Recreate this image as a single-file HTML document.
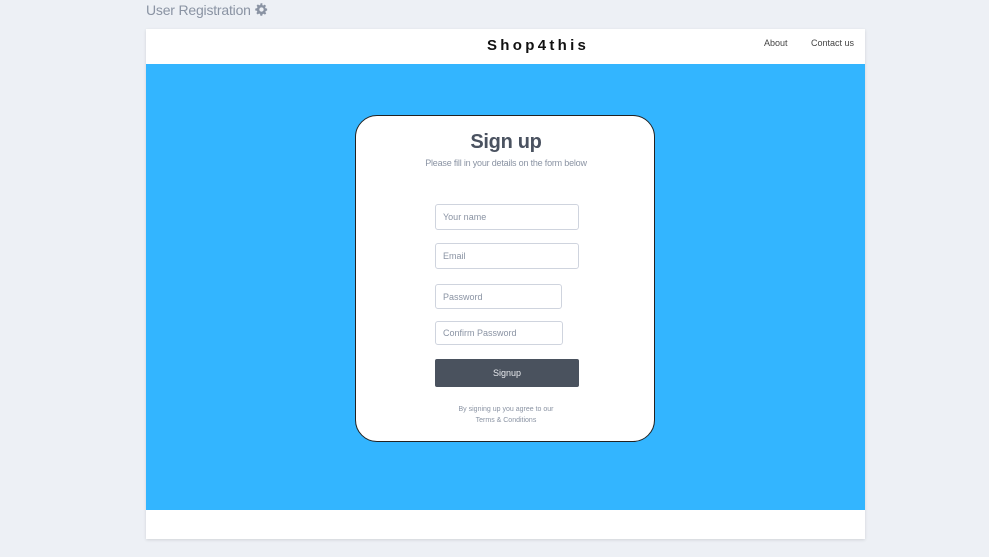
<!DOCTYPE html>
<html><head><style>
body{margin:0;width:989px;height:557px;background:#edf0f5;font-family:"Liberation Sans",sans-serif;position:relative;overflow:hidden}
.abs{position:absolute}
.title{left:146px;top:2px;font-size:14px;color:#8a93a3;letter-spacing:-0.2px}
.frame{left:146px;top:29px;width:719px;height:510px;background:#fff;box-shadow:0 1px 3px rgba(0,0,0,.12)}
.blue{left:146px;top:64px;width:719px;height:446px;background:#33b5ff}
.brand{left:487px;top:37px;font-size:15px;font-weight:bold;letter-spacing:3.3px;color:#111}
.nav{top:38px;font-size:9px;color:#444}
.card{left:355px;top:115px;width:300px;height:327px;background:#fff;border:1px solid #222;border-radius:22px;box-sizing:border-box}
.inp{border:1px solid #cfd4de;border-radius:3px;background:#fff;font-size:9px;color:#8a93a3;box-sizing:border-box;padding-left:7px;display:flex;align-items:center}
</style></head><body>
<div class="abs title">User Registration <svg width="15" height="15" viewBox="0 0 24 24" style="vertical-align:-2px"><path fill="#8a93a3" fill-rule="evenodd" d="M12 8.5a3.5 3.5 0 100 7 3.5 3.5 0 000-7zm9 5v-3l-2.6-.5-.7-1.6 1.5-2.2-2.1-2.1-2.2 1.5-1.6-.7L13.5 2h-3l-.5 2.6-1.6.7-2.2-1.5-2.1 2.1 1.5 2.2-.7 1.6L2 10.5v3l2.6.5.7 1.6-1.5 2.2 2.1 2.1 2.2-1.5 1.6.7.5 2.9h3l.5-2.6 1.6-.7 2.2 1.5 2.1-2.1-1.5-2.2.7-1.6z"/></svg></div>
<div class="abs frame"></div>
<div class="abs blue"></div>
<div class="abs brand">Shop4this</div>
<div class="abs nav" style="left:764px">About</div>
<div class="abs nav" style="left:811px">Contact us</div>
<div class="abs card"></div>
<div class="abs" style="left:356px;width:300px;top:131px;text-align:center;font-size:20px;font-weight:bold;color:#4a5260;letter-spacing:-0.3px">Sign up</div>
<div class="abs" style="left:356px;width:300px;top:158px;text-align:center;font-size:9px;color:#8a93a3;letter-spacing:-0.2px">Please fill in your details on the form below</div>
<div class="abs inp" style="left:435px;top:204px;width:144px;height:26px">Your name</div>
<div class="abs inp" style="left:435px;top:243px;width:144px;height:26px">Email</div>
<div class="abs inp" style="left:435px;top:284px;width:127px;height:25px">Password</div>
<div class="abs inp" style="left:435px;top:321px;width:128px;height:24px">Confirm Password</div>
<div class="abs" style="left:435px;top:359px;width:144px;height:28px;background:#4a525e;border-radius:2px;color:#e8eaee;font-size:9px;display:flex;align-items:center;justify-content:center">Signup</div>
<div class="abs" style="left:356px;width:300px;top:404px;text-align:center;font-size:7px;line-height:11px;color:#8a93a3">By signing up you agree to our<br>Terms &amp; Conditions</div>
</body></html>
